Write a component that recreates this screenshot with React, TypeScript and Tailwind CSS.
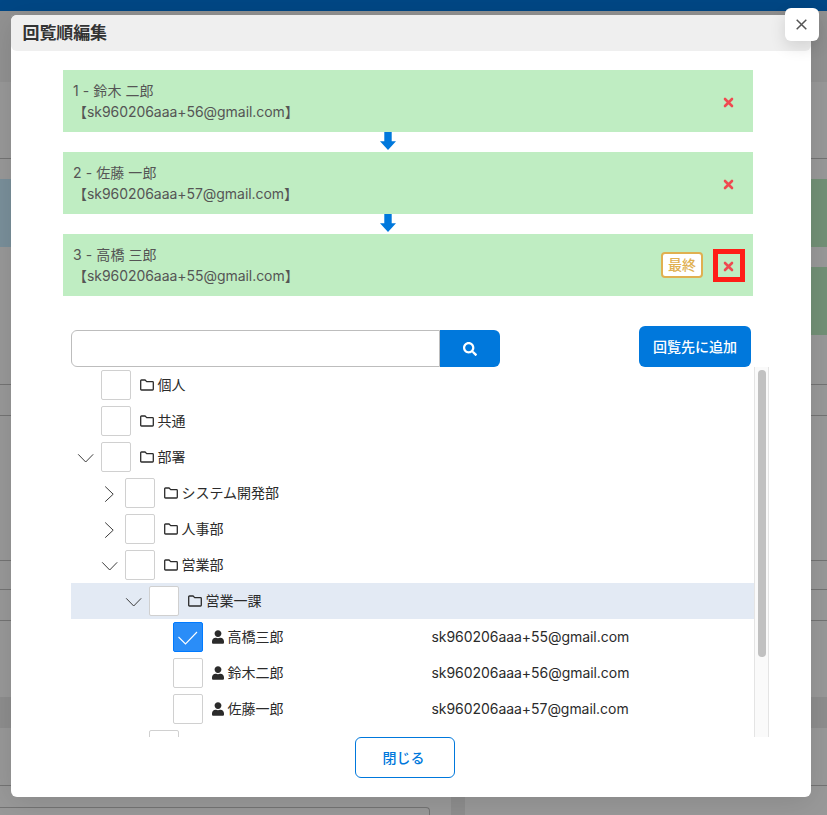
import React, { useState } from 'react';
import { FaSearch, FaUser } from 'react-icons/fa';

const approvers = [
  { name: '鈴木 二郎', mail: 'sk960206aaa+56@gmail.com' },
  { name: '佐藤 一郎', mail: 'sk960206aaa+57@gmail.com' },
  { name: '高橋 三郎', mail: 'sk960206aaa+55@gmail.com' },
];

type Node = {
  label: string;
  pad: string;
  toggle?: 'open' | 'closed';
  mail?: string;
  checked?: boolean;
  selected?: boolean;
};

const nodes: Node[] = [
  { label: '個人', pad: 'pl-0' },
  { label: '共通', pad: 'pl-0' },
  { label: '部署', pad: 'pl-0', toggle: 'open' },
  { label: 'システム開発部', pad: 'pl-6', toggle: 'closed' },
  { label: '人事部', pad: 'pl-6', toggle: 'closed' },
  { label: '営業部', pad: 'pl-6', toggle: 'open' },
  { label: '営業一課', pad: 'pl-12', toggle: 'open', selected: true },
  { label: '高橋三郎', pad: 'pl-[72px]', mail: 'sk960206aaa+55@gmail.com', checked: true },
  { label: '鈴木二郎', pad: 'pl-[72px]', mail: 'sk960206aaa+56@gmail.com' },
  { label: '佐藤一郎', pad: 'pl-[72px]', mail: 'sk960206aaa+57@gmail.com' },
  { label: '', pad: 'pl-12' },
];

function FolderIcon() {
  return (
    <svg className="w-[14px] h-[12px]" viewBox="0 0 14 12" fill="none" stroke="#2b2b2b" strokeWidth="1.3" strokeLinejoin="round">
      <path d="M.7 10.2V1.8q0-.8.8-.8h3.6l1.6 1.6h5.8q.8 0 .8.8v6.8q0 .8-.8.8h-11q-.8 0-.8-.8z" />
    </svg>
  );
}

function Toggle({ state }: { state?: 'open' | 'closed' }) {
  return (
    <svg className="w-[30px] h-9 shrink-0" viewBox="0 0 30 36" fill="none" stroke="#3c3c3c" strokeWidth="1">
      {state === 'open' && <path d="M7.200 15.300l7.500 7.700 7.500-7.700" />}
      {state === 'closed' && <path d="M10.200 11.500l8 7.700-8 7.500" />}
    </svg>
  );
}

function ArrowDown() {
  return (
    <div className="h-5 pl-[317px]">
      <svg className="w-4 h-[18px]" viewBox="0 0 16 18" fill="#0078dc">
        <path d="M4.3 0h7.4v9.3H16L8 18 0 9.3h4.3z" />
      </svg>
    </div>
  );
}

// Page behind the dialog, already darkened
function Side({ right }: { right?: boolean }) {
  return (
    <div className={right ? 'w-4 flex flex-col' : 'w-[11px] flex flex-col'}>
      <div className="h-[71px] bg-[#929292]" />
      <div className="h-[76px] bg-[#999]" />
      <div className="h-px bg-[#747474]" />
      <div className="h-5 bg-[#999]" />
      <div className={right ? 'h-[68px] bg-[#739177]' : 'h-[68px] bg-[#7a909b]'} />
      <div className="h-5 bg-[#999]" />
      <div className={right ? 'h-[68px] bg-[#739177]' : 'h-[68px] bg-[#999]'} />
      <div className="h-[49px] bg-[#999]" />
      <div className="h-[31px] bg-[#999] border-t border-[#747474]" />
      <div className="h-[145px] bg-[#999] border-t border-[#747474]" />
      <div className="h-[29px] bg-[#999] border-t border-[#747474]" />
      <div className="h-[31px] bg-[#999] border-t border-[#747474]" />
      <div className="h-[77px] bg-[#999] border-t border-[#747474]" />
      <div className="h-[31px] bg-[#8e8e8e]" />
      <div className="h-[57px] bg-[#999]" />
      <div className="h-[30px] bg-[#999] border-t border-[#747474]" />
    </div>
  );
}

export default function App() {
  const [keyword, setKeyword] = useState('');

  return (
    <div className="relative w-[827px] h-[815px] overflow-hidden bg-[#999] text-sm text-[#2b2b2b] font-[Inter,'Noto_Sans_CJK_JP',sans-serif]">
      <div className="h-[11px] bg-[#004785]" />
      <div className="h-[804px] flex justify-between">
        <Side />
        <div className="flex-1 flex flex-col justify-between">
          <div className="h-1 bg-[#929292]" />
          <div className="h-[18px] flex">
            <div className="w-[440px] pt-2.5">
              <div className="-ml-3 w-[431px] h-[10px] border-t border-r border-[#747474] rounded-tr" />
            </div>
            <div className="w-[14px] bg-[#8e8e8e]" />
          </div>
        </div>
        <Side right />
      </div>

      {/* Dialog */}
      <div className="absolute left-[11px] top-[15px] w-[800px] h-[782px] bg-white rounded-md shadow-[0_4px_30px_rgba(0,0,0,0.12)]">
        <div className="h-9 bg-[#efefef] rounded-md px-[11.500px] flex items-center">
          <h1 className="text-[17px] leading-none font-bold text-[#333] tracking-[-0.1px]">回覧順編集</h1>
        </div>
        <button className="absolute right-[-8px] top-[-7px] w-[34px] h-[33px] bg-white rounded-md shadow-[0_6px_16px_rgba(0,0,0,0.12)] flex items-center justify-center pr-px">
          <svg className="w-[11px] h-[11px]" viewBox="0 0 11 11" stroke="#555" strokeWidth="1.5">
            <path d="M.7.7l9.6 9.6M10.3.7L.7 10.3" />
          </svg>
        </button>

        {/* Circulation order */}
        <div className="mt-[19px] ml-[52px] w-[690px]">
          {approvers.map((a, i) => (
            <div key={a.mail}>
              <div className="h-[62px] bg-[#bfedc2] pl-2.5 pr-2 flex items-center justify-between text-[#555]">
                <div className="leading-[21px]">
                  <div className="tracking-[0.08px]">{i + 1} - {a.name}</div>
                  <div className="tracking-[-0.05px]">【{a.mail}】</div>
                </div>
                <div className="flex items-center gap-2.5">
                  {i === 2 && (
                    <span className="w-[42px] h-[26px] border-2 border-[#e0b050] rounded bg-white text-[#e0b050] font-medium flex items-center justify-center leading-none pb-px">
                      最終
                    </span>
                  )}
                  <button className={i === 2 ? 'w-8 h-[33px] border-[5px] border-[#ff1d17] flex items-center justify-center' : 'w-8 h-[33px] flex items-center justify-center'}>
                    <svg className="w-[11px] h-[11px] mt-0.5 mr-px" viewBox="0 0 11 11" stroke="#ef4a50" strokeWidth="2.6" strokeLinecap="round">
                      <path d="M2 2l7 7M9 2L2 9" />
                    </svg>
                  </button>
                </div>
              </div>
              {i < 2 && <ArrowDown />}
            </div>
          ))}
        </div>

        {/* Search */}
        <div className="mt-[30px] ml-[60px] w-[680px] h-[41px] flex items-end justify-between">
          <div className="flex h-[37px]">
            <input
              value={keyword}
              onChange={(e) => setKeyword(e.target.value)}
              className="w-[369px] border border-[#bdbdbd] rounded-l-md px-2 outline-none"
            />
            <button className="w-[60px] bg-[#0078dc] rounded-r-md text-white flex items-center justify-center">
              <FaSearch className="w-3.5 h-3.5" />
            </button>
          </div>
          <button className="w-28 h-[41px] bg-[#0078dc] rounded-md text-white font-medium pt-px">回覧先に追加</button>
        </div>

        {/* Tree */}
        <div className="ml-[60px] w-[698px] h-[370px] flex overflow-hidden">
          <div className="w-[683px]">
            {nodes.map((n, i) => (
              <div key={i} className={n.selected ? 'h-9 flex items-center bg-[#e3eaf4]' : 'h-9 flex items-center'}>
                <div className={`${n.pad} w-[360.500px] flex items-center shrink-0`}>
                  <Toggle state={n.toggle} />
                  <span className={n.checked
                    ? 'w-[30px] h-[30px] shrink-0 border border-[#007aff] bg-[#2a8df8] rounded-[2px]'
                    : 'w-[30px] h-[30px] shrink-0 border border-[#d0d0d0] bg-white rounded-[2px]'}>
                    {n.checked && (
                      <svg className="w-7 h-7" viewBox="0 0 28 28" fill="none" stroke="#fff" strokeWidth="1.1">
                        <path d="M4.500 14l7 7L23 9" />
                      </svg>
                    )}
                  </span>
                  {n.label && (
                    <span className="ml-[9px] flex items-center gap-[3.500px] leading-none">
                      {n.mail ? <FaUser className="w-3 h-3.5" /> : <FolderIcon />}
                      <span className="pb-px">{n.label}</span>
                    </span>
                  )}
                </div>
                {n.mail && <span className="tracking-[-0.05px]">{n.mail}</span>}
              </div>
            ))}
          </div>
          <div className="w-[15px] bg-[#fafafa] border-x border-[#e4e4e4] px-[3px] pt-[3px]">
            <div className="w-2 h-[287px] rounded-full bg-[#c1c1c1]" />
          </div>
        </div>

        <button className="block ml-[344px] w-[100px] h-[41px] border border-[#0078dc] rounded-md text-[#0078dc] font-medium pr-[3px]">
          閉じる
        </button>
      </div>
    </div>
  );
}
